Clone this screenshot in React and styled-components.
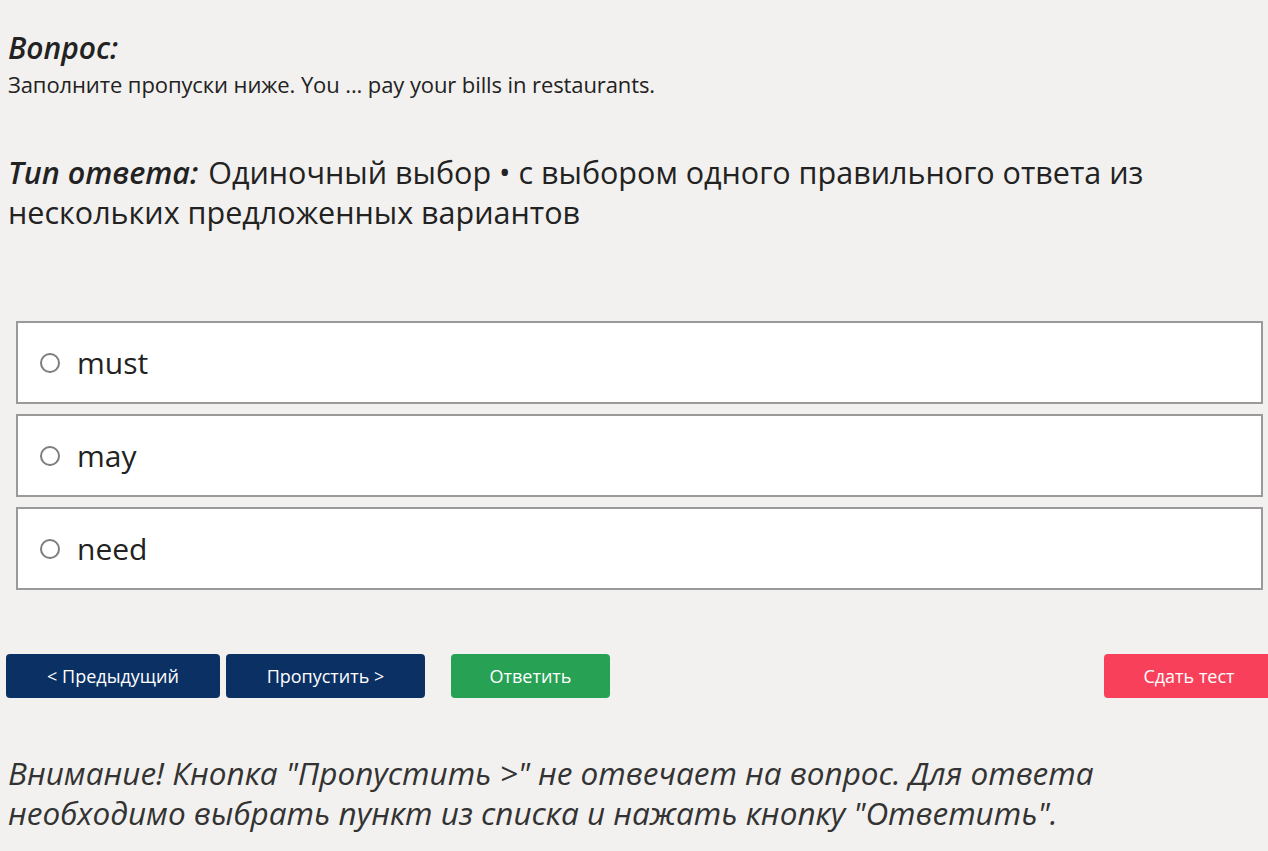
import styled, { createGlobalStyle } from "styled-components";

const Global = createGlobalStyle`
  html, body {
    margin: 0;
    padding: 0;
    background: #f2f1ef;
    overflow: hidden;
  }
  body {
    font-family: "Open Sans", "Noto Sans", sans-serif;
    color: #222;
  }
`;

const Page = styled.div`
  width: 1268px;
  padding: 26px 0 0 8px;
  box-sizing: border-box;
`;

const Title = styled.h2`
  margin: 0;
  font-size: 30px;
  font-weight: 600;
  font-style: italic;
  line-height: 44px;
`;

const Question = styled.p`
  margin: 0;
  font-size: 22px;
  line-height: 28px;
  letter-spacing: -0.1px;
`;

const AnswerType = styled.p`
  margin: 54px 0 0;
  font-size: 30.5px;
  line-height: 40px;
  width: 1200px;
`;

const Label = styled.span`
  font-weight: 600;
  font-style: italic;
  margin-right: 2px;
`;

const Options = styled.ul`
  list-style: none;
  margin: 89px 0 0 8px;
  padding: 0;
  display: flex;
  flex-direction: column;
  gap: 10px;
  width: 1247px;
`;

const Option = styled.li`
  height: 83px;
  box-sizing: border-box;
  background: #fff;
  border: 2px solid #9a9a9a;
  display: flex;
  align-items: center;
  padding-left: 22px;
  gap: 17px;
  font-size: 30px;
`;

const Radio = styled.span`
  width: 20px;
  height: 20px;
  border: 2px solid #7d7d7d;
  border-radius: 50%;
  box-sizing: border-box;
  flex-shrink: 0;
`;

const Buttons = styled.div`
  display: flex;
  margin: 64px 0 0 -2px;
`;

const Button = styled.button`
  height: 44px;
  width: ${(p) => p.$w}px;
  margin-left: ${(p) => p.$ml || 0}px;
  border: none;
  border-radius: 4px;
  color: #fff;
  font-family: inherit;
  font-size: 18px;
  background: ${(p) => p.$bg};
  flex-shrink: 0;
`;

const Notice = styled.p`
  margin: 55px 0 0;
  font-size: 31.5px;
  font-style: italic;
  line-height: 40px;
  color: #333;
`;

const options = ["must", "may", "need"];

export default function App() {
  return (
    <Page>
      <Global />
      <Title>Вопрос:</Title>
      <Question>Заполните пропуски ниже. You ... pay your bills in restaurants.</Question>
      <AnswerType>
        <Label>Тип ответа:</Label> Одиночный выбор • с выбором одного правильного ответа из нескольких
        предложенных вариантов
      </AnswerType>
      <Options>
        {options.map((o) => (
          <Option key={o}>
            <Radio />
            {o}
          </Option>
        ))}
      </Options>
      <Buttons>
        <Button $w={214} $bg="#0b3064">&lt; Предыдущий</Button>
        <Button $w={199} $ml={6} $bg="#0b3064">Пропустить &gt;</Button>
        <Button $w={159} $ml={26} $bg="#27a254">Ответить</Button>
        <Button $w={170} $ml={494} $bg="#f8405a">Сдать тест</Button>
      </Buttons>
      <Notice>
        Внимание! Кнопка "Пропустить &gt;" не отвечает на вопрос. Для ответа
        <br />
        необходимо выбрать пункт из списка и нажать кнопку "Ответить".
      </Notice>
    </Page>
  );
}
